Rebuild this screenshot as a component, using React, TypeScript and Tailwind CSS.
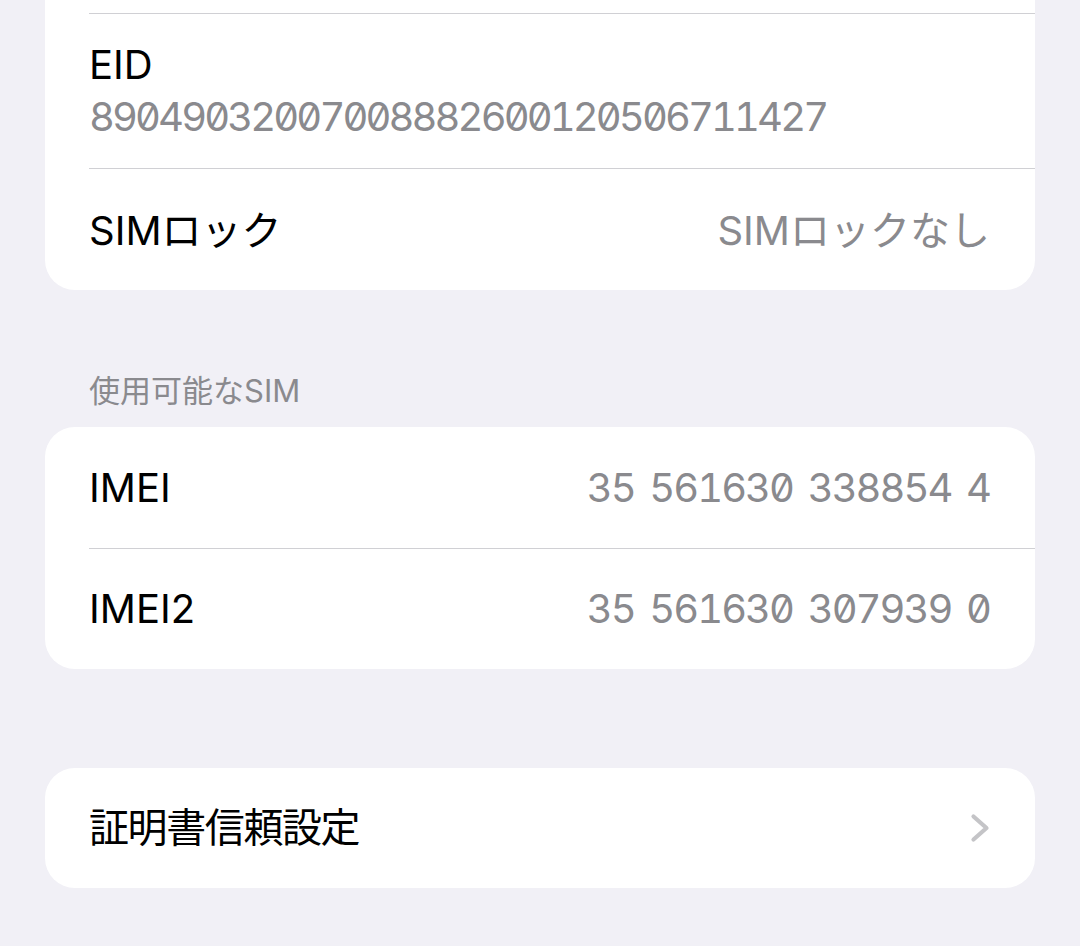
import React from "react";

const font = { fontFamily: 'Inter, "Noto Sans CJK JP", "Noto Sans", sans-serif' };

function Sep() {
  return <div className="ml-[44px] h-px bg-[#d0d0d4]" />;
}

function Chevron() {
  return (
    <svg width="20" height="30" viewBox="0 0 20 30" fill="none">
      <path d="M3.5 3.5 L16.5 15 L3.5 26.5" stroke="#c4c4c7" strokeWidth="4.2" strokeLinecap="round" strokeLinejoin="round" />
    </svg>
  );
}

export default function App() {
  return (
    <div
      className="w-[1080px] h-[946px] overflow-hidden bg-[#f1f0f6] px-[45px] antialiased"
      style={font}
    >
      {/* Card 1 (top cut off) */}
      <div className="bg-white rounded-b-[30px]">
        <div className="h-[13px]" />
        <Sep />
        <div className="h-[154px] pl-[44px] pr-[45px] pt-[27px]">
          <div className="text-[40px] leading-[48px] text-black">EID</div>
          <div className="mt-1 text-[40px] leading-[48px] text-[#8a8a8e] tabular-nums slashed-zero tracking-[-2.9px]">
            89049032007008882600120506711427
          </div>
        </div>
        <Sep />
        <div className="h-[121px] pl-[44px] pr-[45px] pt-[3px] flex items-center justify-between">
          <span className="text-[40px] leading-[48px] text-black">SIMロック</span>
          <span className="text-[40px] leading-[48px] text-[#8a8a8e]">SIMロックなし</span>
        </div>
      </div>

      {/* Section header */}
      <div className="mt-[82px] mb-[17px] pl-[44px] text-[31px] leading-[38px] text-[#8a8a8e]">
        使用可能なSIM
      </div>

      {/* Card 2 */}
      <div className="bg-white rounded-[30px]">
        <div className="h-[121px] pl-[44px] pr-[45px] flex items-center justify-between">
          <span className="text-[40px] leading-[48px] text-black">IMEI</span>
          <span className="text-[40px] leading-[48px] text-[#8a8a8e] tabular-nums slashed-zero tracking-[-2px] [word-spacing:6px]">
            35 561630 338854 4
          </span>
        </div>
        <Sep />
        <div className="h-[120px] pl-[44px] pr-[45px] flex items-center justify-between">
          <span className="text-[40px] leading-[48px] text-black">IMEI2</span>
          <span className="text-[40px] leading-[48px] text-[#8a8a8e] tabular-nums slashed-zero tracking-[-2px] [word-spacing:6px]">
            35 561630 307939 0
          </span>
        </div>
      </div>

      {/* Card 3 */}
      <div className="mt-[99px] bg-white rounded-[30px] h-[120px] pl-[44px] pr-[45px] flex items-center justify-between">
        <span className="text-[40px] leading-[48px] text-black tracking-[-1.4px]">証明書信頼設定</span>
        <Chevron />
      </div>
    </div>
  );
}
